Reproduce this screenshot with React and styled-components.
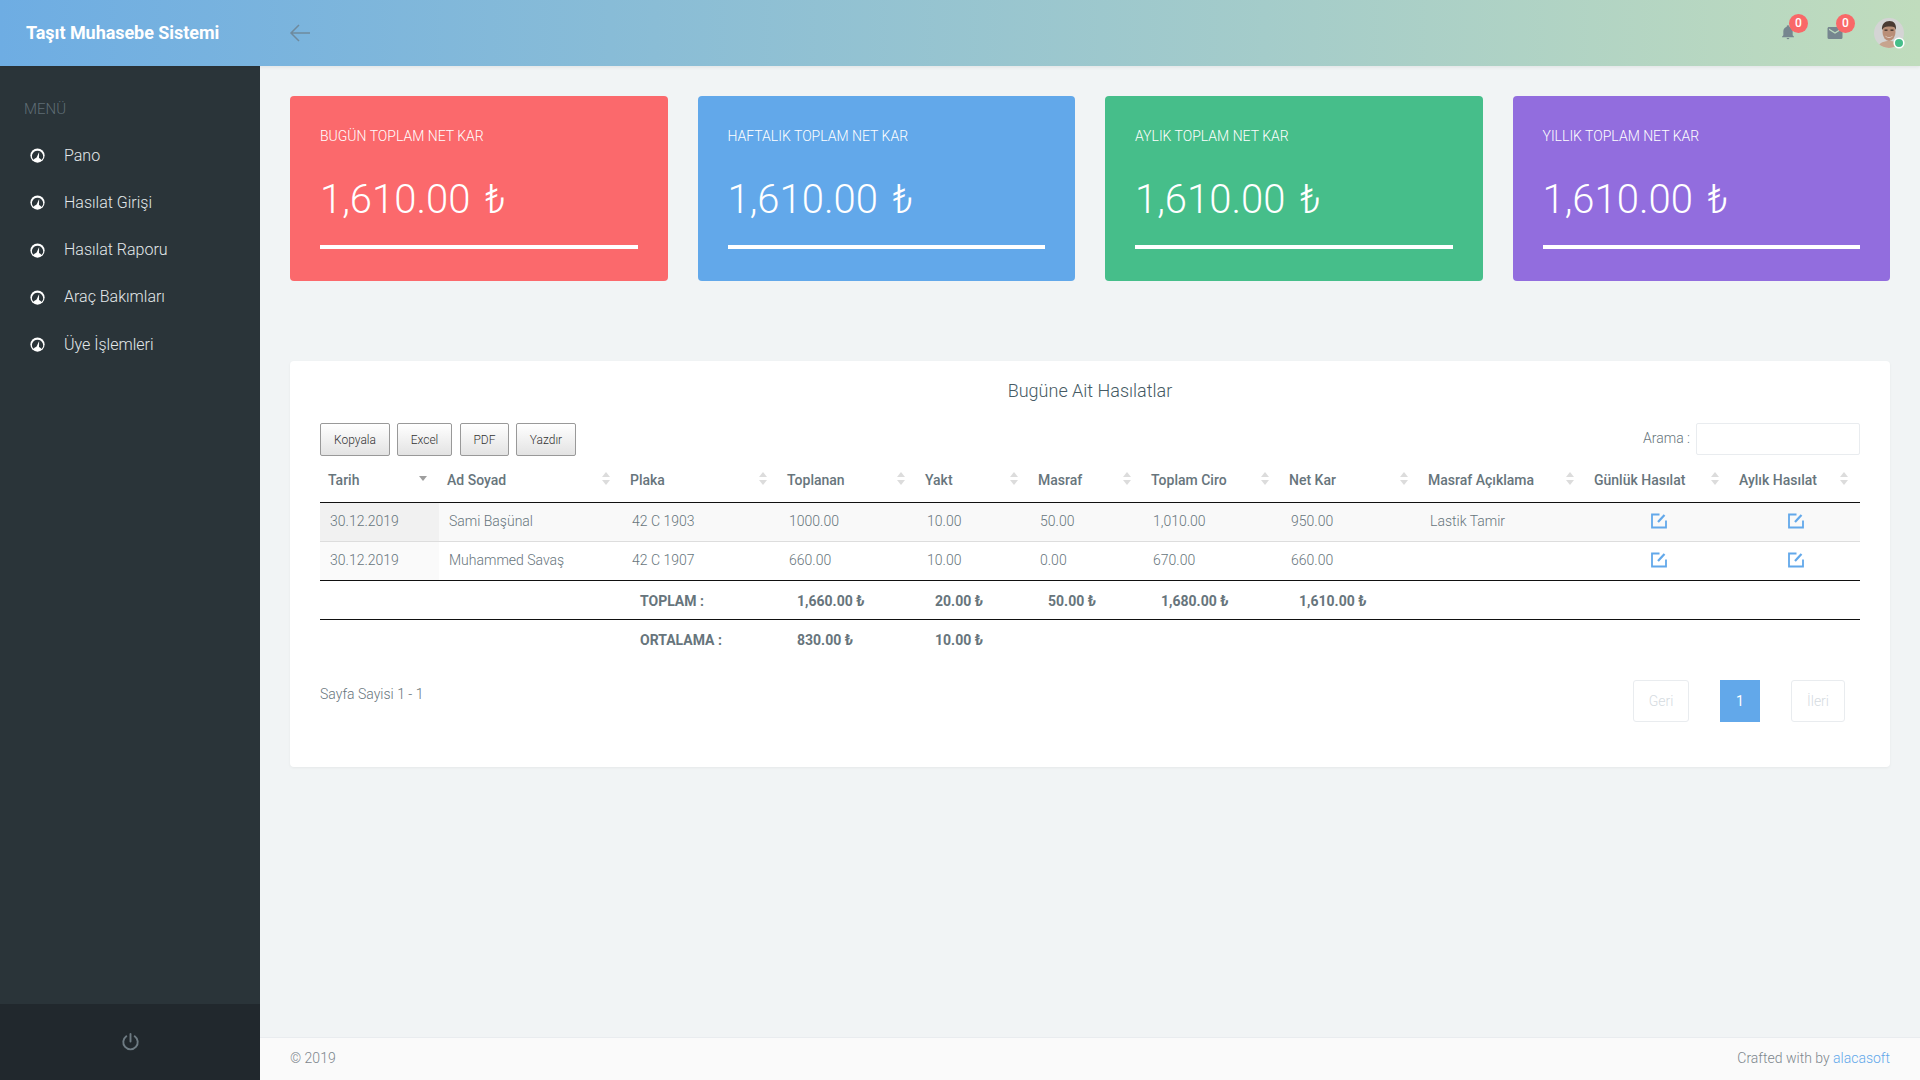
import React from "react";
import styled, { createGlobalStyle } from "styled-components";

const Global = createGlobalStyle`
  html, body { margin: 0; padding: 0; height: 100%; }
  body { font-family: Roboto, "Liberation Sans", sans-serif; font-weight: 300; font-size: 14px; color: #67757c; background: #f1f4f5; }
  * { box-sizing: border-box; }
`;

const Shell = styled.div`
  display: grid; grid-template-columns: 260px 1fr; grid-template-rows: 66px 1fr;
  width: 1920px; height: 1080px; overflow: hidden;
`;
const Topbar = styled.header`
  grid-column: 1 / 3; display: flex; align-items: center; z-index: 2;
  background: linear-gradient(to right, #6eade3 0%, #c0dcbd 100%);
  box-shadow: 0 1px 4px rgba(0,0,0,.08);
`;
const Brand = styled.div`
  width: 260px; padding: 0 0 2px 26px; color: #fff; font-size: 18px; font-weight: 700; letter-spacing: -0.05px;
`;
const Back = styled.svg`
  margin-left: 29px; width: 22px; height: 20px; fill: none; stroke: #6f8a9d; stroke-width: 1.5;
`;
const Right = styled.div`
  margin-left: auto; display: flex; align-items: center; padding-right: 16px;
`;
const Notice = styled.div`
  position: relative; width: 24px; height: 24px; margin-right: ${p => p.$gap}px; margin-top: 1px;
  svg { display: block; width: ${p => p.$size}px; height: ${p => p.$size}px; margin: 2px auto 0; fill: #76868f; }
`;
const Badge = styled.span`
  position: absolute; top: -8px; left: 13px; width: 19px; height: 19px; border-radius: 50%;
  background: #f96868; color: #fff; font-size: 12px; font-weight: 500; line-height: 19px; text-align: center;
`;
const Avatar = styled.div`
  position: relative; width: 30px; height: 30px;
  svg { display: block; width: 30px; height: 30px; }
`;
const Dot = styled.span`
  position: absolute; right: -1px; bottom: -0.5px; width: 10px; height: 10px; border-radius: 50%;
  background: #46be8a; border: 2px solid #fff; box-sizing: content-box; transform: translate(1px, 1px) scale(.8);
`;

const Side = styled.aside`
  background: #2a3439; display: flex; flex-direction: column;
`;
const NavWrap = styled.nav`
  flex: 1; padding: 34px 0 0;
`;
const MenuLabel = styled.div`
  padding-left: 24px; color: #5f6d75; font-size: 15px; line-height: 18px; margin-bottom: 14px;
`;
const NavRow = styled.a`
  display: flex; align-items: center; height: 47.25px; padding-left: 30px; color: #e3e8ea; font-size: 16px; line-height: 20px;
  svg { width: 15px; height: 15px; margin-right: 19px; flex: none; }
`;
const SideFoot = styled.div`
  height: 76px; padding-bottom: 1px; background: #21282d; display: flex; align-items: center; justify-content: center;
  svg { width: 19px; height: 19px; fill: none; stroke: #6e7b83; stroke-width: 2; stroke-linecap: round; }
`;

const Main = styled.main`
  display: flex; flex-direction: column; min-height: 0;
`;
const Content = styled.div`
  flex: 1; padding: 30px 30px 0;
`;
const Cards = styled.div`
  display: grid; grid-template-columns: repeat(4, 1fr); gap: 30px; margin-bottom: 80px;
`;
const Stat = styled.div`
  height: 185px; padding: 32px 30px 0; border-radius: 4px; background: ${p => p.$bg}; color: #fff;
`;
const StatLabel = styled.div`
  font-size: 14px; line-height: 16px; font-weight: 300;
`;
const StatValue = styled.div`
  margin-top: 33px; font-size: 40px; line-height: 46px; font-weight: 300; white-space: pre; word-spacing: 5px;
`;
const Bar = styled.div`
  height: 4px; margin-top: 22px; background: #fff;
`;

const Panel = styled.section`
  height: 406px; padding: 20px 30px 0; background: #fff; border-radius: 4px; box-shadow: 0 1px 3px rgba(0,0,0,.05);
`;
const PanelTitle = styled.h4`
  margin: 0 0 22px; text-align: center; font-size: 18px; line-height: 20px; font-weight: 300; color: #455a64;
`;
const Tools = styled.div`
  display: flex; align-items: flex-start; height: 41px;
`;
const ToolBtn = styled.button`
  height: 33px; width: ${p => p.$w}px; margin-right: ${p => p.$m}px; padding: 0; border: 1px solid #999; border-radius: 2px;
  background: linear-gradient(to bottom, #fff 0%, #e3e3e3 100%);
  font: 300 12px Roboto, sans-serif; color: #333;
`;
const Search = styled.label`
  margin-left: auto; display: flex; gap: 6px; color: #67757c; font-size: 14px; line-height: 30px;
`;
const SearchBox = styled.input`
  width: 164px; height: 32px; border: 1px solid #e9ecef; border-radius: 2px; background: #fff;
`;
const Grid = styled.table`
  width: 1540px; table-layout: fixed; border-collapse: collapse; color: #67757c;
`;
const Cell = styled.td`
  height: 39px; padding: 0 0 2px ${p => p.$center ? 0 : 10}px; line-height: 20px; border-bottom: 1px solid ${p => p.$last ? "#111" : "#ddd"};
  background: ${p => p.$bg};
`;
const Head = styled.th`
  position: relative; height: 38px; padding: 0 0 6px 8px; text-align: left; font-weight: 500; border-bottom: 1px solid #111;
  &::before, &::after {
    content: ""; position: absolute; right: 12px; width: 0; height: 0;
    border-left: 4px solid transparent; border-right: 4px solid transparent;
  }
  &::before { top: 8px; border-bottom: 5px solid ${p => p.$sorted ? "transparent" : "#dcdcdc"}; }
  &::after { top: ${p => p.$sorted ? 12 : 16}px; border-top: 5px solid ${p => p.$sorted ? "#9e9e9e" : "#dcdcdc"}; }
`;
const Foot = styled.td`
  height: 39px; padding: 2px 0 0 18px; font-weight: 700; border-bottom: 1px solid ${p => p.$line ? "#111" : "transparent"}; line-height: 20px;
`;
const EditIcon = styled.svg`
  display: block; margin: 0 auto; width: 16px; height: 16px; fill: none; stroke: #62a8ea; stroke-width: 1.8;
`;
const PagerRow = styled.div`
  display: flex; align-items: flex-start; margin-top: 21px;
`;
const PageInfo = styled.div`
  line-height: 20px; margin-top: 4px; color: #67757c;
`;
const Pager = styled.div`
  margin-left: auto; margin-right: 15px; display: flex; gap: 31px;
`;
const PageBtn = styled.div`
  width: ${p => p.$w}px; height: 42px; line-height: 40px; text-align: center; font-size: 14px; border-radius: ${p => p.$on ? 0 : 3}px;
  background: ${p => p.$on ? "#62a8ea" : "#fff"}; color: ${p => p.$on ? "#fff" : "#d5dbdf"};
  border: 1px solid ${p => p.$on ? "#62a8ea" : "#e9ecef"};
  font-weight: ${p => p.$on ? 400 : 300};
`;
const Footer = styled.footer`
  height: 43px; padding: 0 30px 3px; background: #fafafa; border-top: 1px solid #e9ecef; display: flex; justify-content: space-between; align-items: center; color: #7d878d; font-size: 14px;
  a { color: #62a8ea; text-decoration: none; }
`;

const Gauge = () => (
  <svg viewBox="0 0 24 24">
    <circle cx="12" cy="12" r="11.4" fill="#fff" />
    <path d="M18.4 19C20.8 17 22 14.7 20.5 10.5A9 9 0 0 0 12 4.4A9 9 0 0 0 3.5 10.5C2.4 14.7 3.6 17 5.8 18.6C7.5 16.6 9.6 15.6 12 15.6C14.4 15.6 16.6 16.8 18.4 19Z" fill="#2a3439" />
    <path d="M10.2 15.8 L14.6 6.4 L14.4 16.4Z" fill="#fff" />
  </svg>
);
const Edit = () => (
  <EditIcon viewBox="0 0 16 16">
    <path d="M8.5 1.5H1V14.5H15V7.5" />
    <path d="M13.5 2 L7 9" strokeWidth="2.2" />
  </EditIcon>
);

const menu = ["Pano", "Hasılat Girişi", "Hasılat Raporu", "Araç Bakımları", "Üye İşlemleri"];
const stats = [
  ["BUGÜN TOPLAM NET KAR", "#fb696c"],
  ["HAFTALIK TOPLAM NET KAR", "#62a8ea"],
  ["AYLIK TOPLAM NET KAR", "#46be8a"],
  ["YILLIK TOPLAM NET KAR", "#926dde"],
];
const cols = [
  ["Tarih", 119], ["Ad Soyad", 183], ["Plaka", 157], ["Toplanan", 138], ["Yakt", 113], ["Masraf", 113],
  ["Toplam Ciro", 138], ["Net Kar", 139], ["Masraf Açıklama", 166], ["Günlük Hasılat", 145], ["Aylık Hasılat", 129],
];
const rows = [
  ["30.12.2019", "Sami Başünal", "42 C 1903", "1000.00", "10.00", "50.00", "1,010.00", "950.00", "Lastik Tamir"],
  ["30.12.2019", "Muhammed Savaş", "42 C 1907", "660.00", "10.00", "0.00", "670.00", "660.00", ""],
];

export default function App() {
  return (
    <Shell>
      <Global />
      <Topbar>
        <Brand>Taşıt Muhasebe Sistemi</Brand>
        <Back viewBox="0 0 22 20"><path d="M21 10H2M10 2L2 10L10 18" /></Back>
        <Right>
          <Notice $gap={23} $size={16}>
            <svg viewBox="0 0 24 24"><path d="M21,19V20H3V19L5,17V11C5,7.9 7.03,5.17 10,4.29C10,4.19 10,4.1 10,4A2,2 0 0,1 12,2A2,2 0 0,1 14,4C14,4.1 14,4.19 14,4.29C16.97,5.17 19,7.9 19,11V17L21,19M14,21A2,2 0 0,1 12,23A2,2 0 0,1 10,21" /></svg>
            <Badge>0</Badge>
          </Notice>
          <Notice $gap={27} $size={18}>
            <svg viewBox="0 0 24 24"><path d="M20,8L12,13L4,8V6L12,11L20,6M20,4H4C2.89,4 2,4.89 2,6V18A2,2 0 0,0 4,20H20A2,2 0 0,0 22,18V6C22,4.89 21.1,4 20,4Z" /></svg>
            <Badge>0</Badge>
          </Notice>
          <Avatar>
            <svg viewBox="0 0 30 30">
              <defs><clipPath id="av"><circle cx="15" cy="15" r="15" /></clipPath></defs>
              <g clipPath="url(#av)">
                <rect width="30" height="30" fill="#d4d4d4" />
                <path d="M3 30C5 24 11 23 15 23C20 23 25 24 27 30Z" fill="#c7a48e" />
                <ellipse cx="15" cy="14" rx="6.5" ry="9" fill="#b98e77" />
                <path d="M8 12C7.5 6 11 3 15.5 3C20 3 22.5 6 22 12C21 9.5 20 8.5 17 8.5C13 8.5 10.5 8.5 9.5 10Z" fill="#4a3a33" />
                <path d="M11 17.5C13 19.5 17 19.5 19 17.5C18 20.5 12 20.5 11 17.5Z" fill="#f0e6df" />
                <rect x="10.5" y="11.5" width="3" height="1.3" fill="#3c2f2a" />
                <rect x="16.5" y="11.5" width="3" height="1.3" fill="#3c2f2a" />
              </g>
            </svg>
            <Dot />
          </Avatar>
        </Right>
      </Topbar>
      <Side>
        <NavWrap>
          <MenuLabel>MENÜ</MenuLabel>
          {menu.map(m => <NavRow key={m}><Gauge />{m}</NavRow>)}
        </NavWrap>
        <SideFoot>
          <svg viewBox="0 0 20 20"><path d="M10 2V10M5.6 4.5A7.6 7.6 0 1 0 14.4 4.5" /></svg>
        </SideFoot>
      </Side>
      <Main>
        <Content>
          <Cards>
            {stats.map(([t, c]) => (
              <Stat key={t} $bg={c}>
                <StatLabel>{t}</StatLabel>
                <StatValue>1,610.00 ₺</StatValue>
                <Bar />
              </Stat>
            ))}
          </Cards>
          <Panel>
            <PanelTitle>Bugüne Ait Hasılatlar</PanelTitle>
            <Tools>
              <ToolBtn $w={70} $m={7}>Kopyala</ToolBtn>
              <ToolBtn $w={55} $m={8}>Excel</ToolBtn>
              <ToolBtn $w={49} $m={7}>PDF</ToolBtn>
              <ToolBtn $w={60} $m={0}>Yazdır</ToolBtn>
              <Search>Arama : <SearchBox /></Search>
            </Tools>
            <Grid>
              <colgroup>{cols.map(([n, w]) => <col key={n} style={{ width: w }} />)}</colgroup>
              <thead>
                <tr>{cols.map(([n], i) => <Head key={n} $sorted={i === 0}>{n}</Head>)}</tr>
              </thead>
              <tbody>
                {rows.map((r, ri) => (
                  <tr key={ri}>
                    {r.map((v, i) => (
                      <Cell key={i} $last={ri === 1} $bg={i === 0 ? (ri === 0 ? "#f1f1f1" : "#fafafa") : (ri === 0 ? "#f9f9f9" : "#fff")}>{v}</Cell>
                    ))}
                    <Cell $center $last={ri === 1} $bg={ri === 0 ? "#f9f9f9" : "#fff"}><Edit /></Cell>
                    <Cell $center $last={ri === 1} $bg={ri === 0 ? "#f9f9f9" : "#fff"}><Edit /></Cell>
                  </tr>
                ))}
                <tr>
                  <Foot $line /><Foot $line /><Foot $line>TOPLAM :</Foot><Foot $line>1,660.00 ₺</Foot><Foot $line>20.00 ₺</Foot>
                  <Foot $line>50.00 ₺</Foot><Foot $line>1,680.00 ₺</Foot><Foot $line>1,610.00 ₺</Foot><Foot $line /><Foot $line /><Foot $line />
                </tr>
                <tr>
                  <Foot /><Foot /><Foot>ORTALAMA :</Foot><Foot>830.00 ₺</Foot><Foot>10.00 ₺</Foot>
                  <Foot /><Foot /><Foot /><Foot /><Foot /><Foot />
                </tr>
              </tbody>
            </Grid>
            <PagerRow>
              <PageInfo>Sayfa Sayisi 1 - 1</PageInfo>
              <Pager>
                <PageBtn $w={56}>Geri</PageBtn>
                <PageBtn $w={40} $on>1</PageBtn>
                <PageBtn $w={54}>İleri</PageBtn>
              </Pager>
            </PagerRow>
          </Panel>
        </Content>
        <Footer>
          <span>© 2019</span>
          <span>Crafted with by <a>alacasoft</a></span>
        </Footer>
      </Main>
    </Shell>
  );
}
